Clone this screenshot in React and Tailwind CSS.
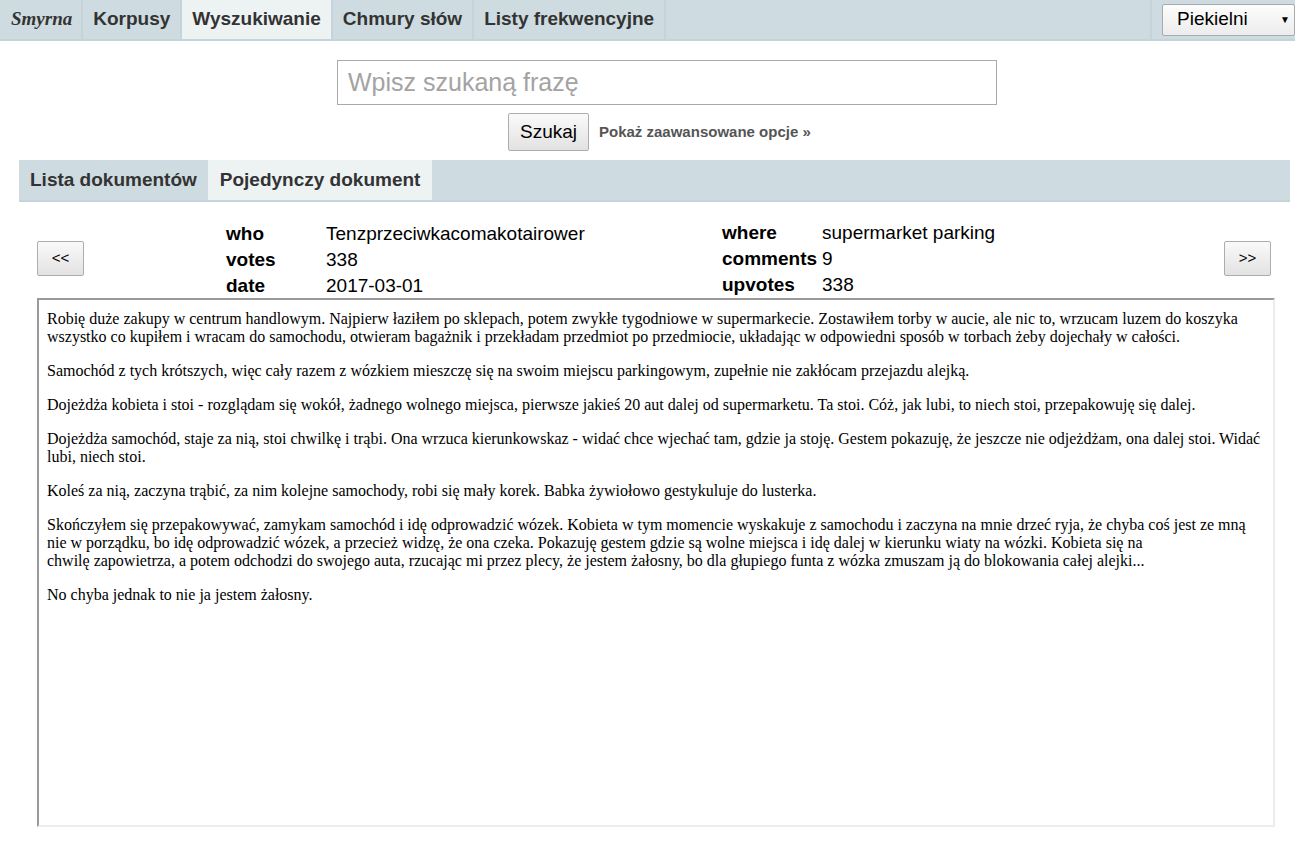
import React from 'react';

const paragraphs = [
  'Robię duże zakupy w centrum handlowym. Najpierw łaziłem po sklepach, potem zwykłe tygodniowe w supermarkecie. Zostawiłem torby w aucie, ale nic to, wrzucam luzem do koszyka wszystko co kupiłem i wracam do samochodu, otwieram bagażnik i przekładam przedmiot po przedmiocie, układając w odpowiedni sposób w torbach żeby dojechały w całości.',
  'Samochód z tych krótszych, więc cały razem z wózkiem mieszczę się na swoim miejscu parkingowym, zupełnie nie zakłócam przejazdu alejką.',
  'Dojeżdża kobieta i stoi - rozglądam się wokół, żadnego wolnego miejsca, pierwsze jakieś 20 aut dalej od supermarketu. Ta stoi. Cóż, jak lubi, to niech stoi, przepakowuję się dalej.',
  'Dojeżdża samochód, staje za nią, stoi chwilkę i trąbi. Ona wrzuca kierunkowskaz - widać chce wjechać tam, gdzie ja stoję. Gestem pokazuję, że jeszcze nie odjeżdżam, ona dalej stoi. Widać lubi, niech stoi.',
  'Koleś za nią, zaczyna trąbić, za nim kolejne samochody, robi się mały korek. Babka żywiołowo gestykuluje do lusterka.',
];

const navTabs = ['Korpusy', 'Wyszukiwanie', 'Chmury słów', 'Listy frekwencyjne'];

function MetaRow({ label, value }) {
  return (
    <div className="flex h-[26px] items-center">
      <span className="w-[100px] font-bold">{label}</span>
      <span>{value}</span>
    </div>
  );
}

function GrayButton({ children, className = '' }) {
  return (
    <button
      type="button"
      className={`border border-[#adadad] rounded-[2px] bg-gradient-to-b from-[#fafafa] to-[#e2e2e2] text-black ${className}`}
    >
      {children}
    </button>
  );
}

export default function App() {
  return (
    <div className="min-h-[851px] bg-white text-[#222] font-['Liberation_Sans',Arial,sans-serif]">
      {/* Top nav */}
      <div className="flex h-[41px] bg-[#cedce1] border-b-2 border-[#c3d4da]">
        <div className="flex items-center pl-[11px] pr-[9px] border-r-2 border-[#c4d4da] font-['Liberation_Serif',serif] italic font-bold text-[19px] text-[#333]">
          Smyrna
        </div>
        {navTabs.map((t) => (
          <div
            key={t}
            className={`flex items-center px-[10px] border-r-2 border-[#c4d4da] font-bold text-[19px] text-[#333] ${
              t === 'Wyszukiwanie' ? 'bg-[#edf2f3]' : ''
            }`}
          >
            {t}
          </div>
        ))}
        <div className="flex-1" />
        <div className="flex items-center border-l-2 border-[#c4d4da] pl-[10px]">
          <div className="flex items-center justify-between w-[133px] h-[32px] pl-[14px] pr-[4px] border border-[#aaa] rounded-[2px] bg-gradient-to-b from-[#fdfdfd] to-[#ececec] text-[19px] text-black">
            <span>Piekielni</span>
            <span className="text-[10px]">▼</span>
          </div>
        </div>
      </div>

      {/* Search */}
      <div className="flex flex-col items-start pl-[337px] pt-[19px]">
        <div className="w-[660px] h-[45px] border border-[#aaa] flex items-center px-[10px] text-[25px] text-[#a3a3a3]">
          Wpisz szukaną frazę
        </div>
        <div className="flex items-center mt-[8px] ml-[171px]">
          <GrayButton className="w-[81px] h-[38px] text-[19px]">Szukaj</GrayButton>
          <span className="ml-[10px] text-[15px] font-bold text-[#555]">Pokaż zaawansowane opcje »</span>
        </div>
      </div>

      {/* Sub tabs */}
      <div className="ml-[19px] mt-[9px] w-[1271px] h-[42px] flex bg-[#cedce1] border-b-2 border-[#c3d4da]">
        <div className="flex items-center px-[11px] font-bold text-[19px] text-[#333]">Lista dokumentów</div>
        <div className="flex items-center px-[12px] bg-[#edf2f3] font-bold text-[19px] text-[#333]">
          Pojedynczy dokument
        </div>
      </div>

      {/* Document */}
      <div className="ml-[37px] w-[1238px] mt-[17px]">
        <div className="flex items-center text-[19px] text-black">
          <GrayButton className="w-[47px] h-[35px] text-[15px] mb-[2px]">&lt;&lt;</GrayButton>
          <div className="flex ml-[142px] flex-1 pt-[2px]">
            <div className="w-[496px]">
              <MetaRow label="who" value="Tenzprzeciwkacomakotairower" />
              <MetaRow label="votes" value="338" />
              <MetaRow label="date" value="2017-03-01" />
            </div>
            <div className="-mt-[1px]">
              <MetaRow label="where" value="supermarket parking" />
              <MetaRow label="comments" value="9" />
              <MetaRow label="upvotes" value="338" />
            </div>
          </div>
          <GrayButton className="w-[47px] h-[35px] text-[15px] mr-[4px] mb-[2px]">&gt;&gt;</GrayButton>
        </div>

        <div className="-mt-[1px] h-[529px] border-2 border-t-[#999] border-l-[#999] border-b-[#ececec] border-r-[#ececec] px-[8px] pt-[10px] font-['Liberation_Serif','Times_New_Roman',serif] text-[16px] leading-[18px] text-black">
          {paragraphs.map((p, i) => (
            <p key={i} className="mb-[16px]">{p}</p>
          ))}
          <p className="mb-[16px]">
            Skończyłem się przepakowywać, zamykam samochód i idę odprowadzić wózek. Kobieta w tym momencie wyskakuje z samochodu i zaczyna na mnie drzeć ryja, że chyba coś jest ze mną nie w porządku, bo idę odprowadzić wózek, a przecież widzę, że ona czeka. Pokazuję gestem gdzie są wolne miejsca i idę dalej w kierunku wiaty na wózki. Kobieta się na
            <br />
            chwilę zapowietrza, a potem odchodzi do swojego auta, rzucając mi przez plecy, że jestem żałosny, bo dla głupiego funta z wózka zmuszam ją do blokowania całej alejki...
          </p>
          <p>No chyba jednak to nie ja jestem żałosny.</p>
        </div>
      </div>
    </div>
  );
}
